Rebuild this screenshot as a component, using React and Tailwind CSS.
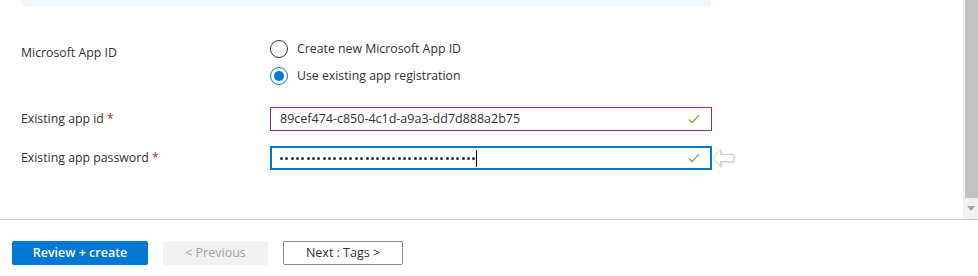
import React from 'react';

const font = { fontFamily: '"Segoe UI", "Open Sans", "Noto Sans", sans-serif' };

function Check() {
  return <svg width="12" height="10" viewBox="0 0 12 10" className="shrink-0">
      <path d="M1 5.5 L4.2 8.6 L11 1.2" fill="none" stroke="#5db300" strokeWidth="1.1" />
    </svg>;
}

function Radio({ checked, label }) {
  return <label className="flex items-center h-[27px]">
      <span className={`w-[18px] h-[18px] rounded-full border flex items-center justify-center ${checked ? 'border-[#0078d4]' : 'border-[#323130]'}`}>
        {checked && <span className="w-[10px] h-[10px] rounded-full bg-[#0078d4]" />}
      </span>
      <span className="ml-[9px] pt-[1px] text-[12.3px] text-[#323130]">{label}</span>
    </label>;
}

function Label({ children, required }) {
  return <div className="w-[249px] shrink-0 text-[12.3px] text-[#323130]">
      {children}
      {required && <span className="text-[#a4262c]"> *</span>}
    </div>;
}

export default function App() {
  const dots = Array.from({ length: 37 });
  return <div style={font} className="w-[978px] h-[276px] bg-white flex flex-col overflow-hidden">
      <div className="flex h-[219px]">
        <div className="flex-1 pl-[21px]">
          <div className="w-[690px] h-[6px] bg-[#eff6fc] rounded-b-[3px]" />

          {/* Microsoft App ID */}
          <div className="flex mt-[29px]">
            <div className="pt-[9px]"><Label>Microsoft App ID</Label></div>
            <div className="flex flex-col">
              <Radio label="Create new Microsoft App ID" />
              <Radio checked label="Use existing app registration" />
            </div>
          </div>

          {/* Existing app id */}
          <div className="flex items-center mt-[18px]">
            <div className="pt-[1px]"><Label required>Existing app id</Label></div>
            <div className="w-[442px] h-[24px] border border-[#8a2da5] flex items-center justify-between pl-[9px] pr-[11px]">
              <span className="text-[12.5px] text-[#323130]">89cef474-c850-4c1d-a9a3-dd7d888a2b75</span>
              <Check />
            </div>
          </div>

          {/* Existing app password */}
          <div className="flex items-center mt-[15px]">
            <div className="pt-[1px]"><Label required>Existing app password</Label></div>
            <div className="w-[442px] h-[24px] border-2 border-[#0078d4] flex items-center justify-between pl-[8px] pr-[10px]">
              <div className="flex items-center">
                <div className="flex items-center gap-[2.35px]">
                  {dots.map((_, i) => <span key={i} className="w-[3px] h-[3px] rounded-full bg-[#323130]" />)}
                </div>
                <span className="ml-[1px] w-[1px] h-[17px] bg-black" />
              </div>
              <Check />
            </div>
            <svg width="24" height="20" viewBox="0 0 24 20" className="drop-shadow-[1px_1px_1px_rgba(0,0,0,0.15)]">
              <path d="M8.5 1.5 L1.5 10 L8.5 18.5 L8.5 13.5 L21.5 13.5 L21.5 6.5 L8.5 6.5 Z" fill="white" stroke="#d4d4d4" strokeWidth="1" />
            </svg>
          </div>
        </div>

        {/* scrollbar */}
        <div className="w-[15px] bg-[#f1f1f1] flex flex-col items-end">
          <div className="w-[13px] h-[198px] bg-[#c1c1c1]" />
          <div className="w-[15px] flex-1 flex items-center justify-center">
            <svg width="8" height="5" viewBox="0 0 8 5"><path d="M0 0 L8 0 L4 5 Z" fill="#a3a3a3" /></svg>
          </div>
        </div>
      </div>

      <div className="h-px bg-[#c8c6c4]" />

      <div className="flex gap-[15px] pl-[12px] pt-[21px]">
        <button className="w-[136px] h-[24px] bg-[#0078d4] rounded-[2px] text-white text-[12.5px] font-semibold">Review + create</button>
        <button className="w-[105px] h-[24px] bg-[#f3f2f1] rounded-[2px] text-[#a19f9d] text-[12.5px]">&lt; Previous</button>
        <button className="w-[120px] h-[24px] bg-white border border-[#8a8886] rounded-[2px] text-[#323130] text-[12.5px]">Next : Tags &gt;</button>
      </div>
    </div>;
}
